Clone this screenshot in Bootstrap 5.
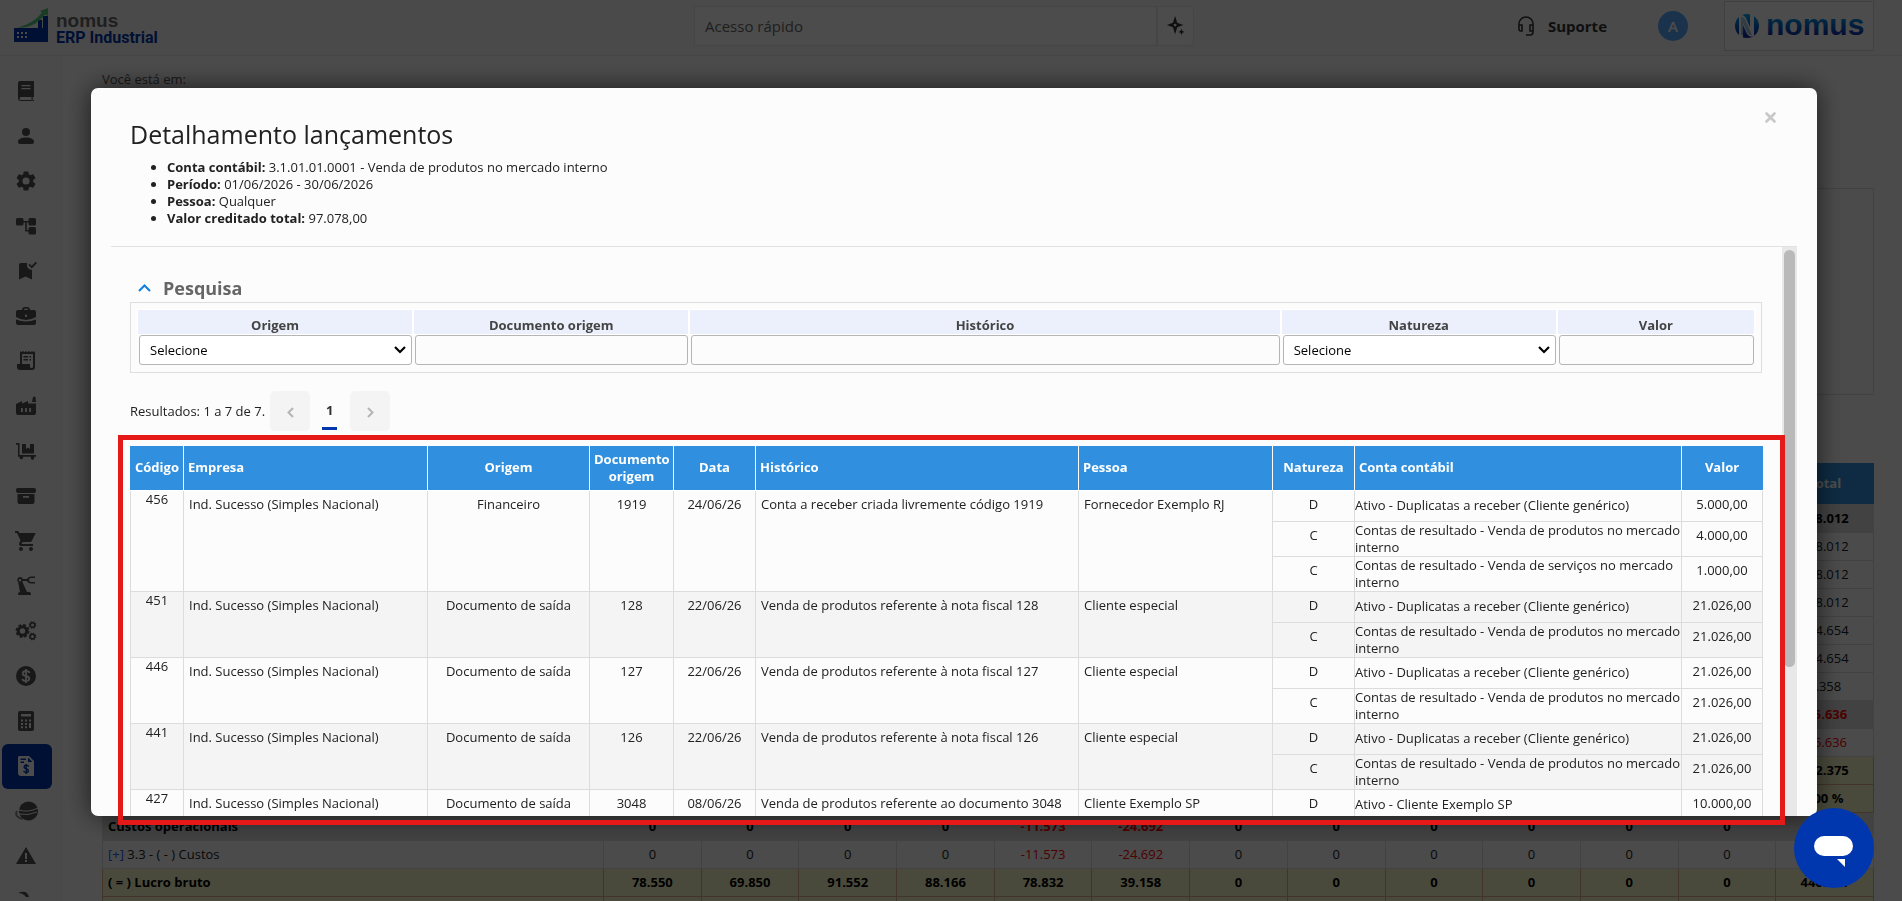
<!DOCTYPE html>
<html lang="pt-BR">
<head>
<meta charset="utf-8">
<meta name="viewport" content="width=device-width, initial-scale=1">
<title>Nomus ERP Industrial</title>
<link href="https://cdn.jsdelivr.net/npm/bootstrap@5.3.0/dist/css/bootstrap.min.css" rel="stylesheet">
<style>
body{font-family:"Open Sans",sans-serif;font-size:13px;line-height:17px;color:#212121;background:#fafafa;height:100vh;overflow:hidden}
/* top bar */
.topbar{height:56px;background:#f8f8f8;border-bottom:1px solid #e8e8e8;padding:0 28px 0 14px}
.topbar>div{flex:1 1 0}
.quick{flex:0 0 500px!important;height:40px;margin-top:6px}
.quick input{border:1px solid #e6e6e6;border-radius:0;background:#fdfdfd;font-size:15px;padding:0 10px}
.quick input::placeholder{color:#6a6a6a}
.quick button{width:37px;border:1px solid #e6e6e6;border-radius:0 5px 5px 0;background:#fdfdfd}
.brandtext{font-size:16px;line-height:17px;font-family:Roboto,sans-serif;font-weight:700;color:#0037ae}
.brandtext .top{font-family:"Liberation Sans",sans-serif;font-size:19px;line-height:17px;color:#6a6a6a}
.account{height:52px}
.support{font-size:15px;font-weight:700;color:#333;text-decoration:none;margin-right:51px}
.avatar{width:30px;height:30px;background:#5aa8ff;font-size:15px;font-weight:600;margin-right:20px}
.company{width:150px;height:50px;border:1px solid #d5d5d5;background:#fdfdfd}
/* side bar */
.sidebar{width:62px;background:#f8f8f8;border-right:1px solid #eee;padding:13px 0 0 2px}
.sidebar a{width:50px;height:45px;padding:0 2px 2px 0;border-radius:6px;color:#505050}
.sidebar a.on{background:#0037ae;color:#fff}
.sidebar svg{width:24px;height:24px;fill:currentColor}
/* report page */
.lower{min-height:0}
.page{padding:13px 28px 0 40px;min-width:0}
.crumb{line-height:20px;color:#555}
.panelbox{height:207px;margin-top:99px;border:1px solid #dcdcdc}
.report{margin-top:68px;table-layout:fixed;border-collapse:collapse;width:100%;text-align:center}
.report .wide{width:501px}
.report th{background:#3090df;color:#fff;height:41px}
.report td{height:28px;padding:0 5px;border:1px solid #dcdcdc;white-space:nowrap}
.report td:first-child{text-align:left}
.report .sum td{background:#dcdcdc;font-weight:700;color:#000}
.report .gold td{background:#f8f8c8;border-color:#e0b090;font-weight:700;color:#000}
.report .neg{color:#f00!important}
.report a{color:#2060ff;text-decoration:none}
/* dialog */
.shade{background:rgba(0,0,0,.7);z-index:10}
.dlg{position:fixed;z-index:20;top:88px;left:91px;right:85px;bottom:85px}
.sheet{background:#fcfcfc;border-radius:7px;box-shadow:0 0 26px rgba(0,0,0,.65);overflow:hidden;padding:0 20px}
.dlghead{height:159px;padding:28px 19px 0;border-bottom:1px solid #e2e2e2}
.dlghead h1{font-size:25px;line-height:36px;font-weight:400;margin:0 0 7px}
.dlghead ul{padding-left:37px}
.closebtn{top:16px;right:37px;color:#c8c8c8;line-height:1}
.scrollarea{min-height:0}
.content{overflow:hidden;padding:31px 20px 0 19px}
.track{width:15px;background:#e8e8e8;padding:3px 2px}
.thumb{width:11px;height:74%;border-radius:6px;background:#b9b9b9}
.content h2{font-size:18px;line-height:20px;font-weight:700;color:#666}
.filters{border:1px solid #dedede;padding:7px 5px}
.filters table{table-layout:fixed;width:100%;border-collapse:separate;border-spacing:2px 0}
.filters th{height:24px;background:#ecf0fc;color:#444;text-align:center;vertical-align:bottom;padding:0;line-height:17px;box-shadow:0 0 0 1px #fff}
.filters td{padding:1px 0 0 1px}
.f-m{width:274px}.f-l{width:589px}.f-s{width:196px}
.ctl{display:block;width:100%;height:30px;border:1px solid #b5b5b5;border-radius:3px;background:#fcfcfc;padding:0 10px;font-size:13px;color:#000}
select.ctl{appearance:none;background:#fff url("data:image/svg+xml,%3Csvg xmlns='http://www.w3.org/2000/svg' viewBox='0 0 12 8'%3E%3Cpath d='M1 1l5 5 5-5' fill='none' stroke='%23000' stroke-width='2.2'/%3E%3C/svg%3E") no-repeat right 5px center/12px 8px}
.pager{margin:18px 0 15px}
.pager span{margin-right:5px}
.pager button{width:40px;height:40px;border:0;border-radius:5px;background:#f4f4f4}
.pager .cur{width:15px;height:38px;border-bottom:3px solid #0037ae;line-height:36px;font-weight:700;color:#333;text-decoration:none;margin:0 13px 0 12px}
.entries{table-layout:fixed;border-collapse:collapse;width:100%}
.entries th{background:#3090df;color:#fff;height:44px;padding:0 4px;font-weight:700;border:1px solid #fff;border-top:0;text-align:center}
.entries th:first-child{border-left-color:#3090df}
.entries th:last-child{border-right-color:#3090df}
.entries td{border:1px solid #dcdcdc;padding:5px 5px 8px;text-align:center;vertical-align:top}
.entries th.l,.entries td.l{text-align:left}
.entries td.code{padding:0}
.entries td.acct{padding:0;text-align:left;vertical-align:middle;white-space:nowrap}
.entries tbody:nth-of-type(even) td{background:#f4f4f4}
.w1{width:53px}.w2{width:244px}.w3{width:162px}.w4{width:84px}.w5{width:82px}.w6{width:323px}.w7{width:194px}.w9{width:327px}.w10{width:81px}
/* red frame laid over the results */
.frame{top:347px;left:27px;right:32px;bottom:-9px;border:5px solid #e61919;pointer-events:none}
.chat{position:fixed;z-index:30;right:28px;bottom:13px;width:80px;height:80px;background:#0037ae;border:0}
</style>
</head>
<body class="d-flex flex-column">
<header class="topbar d-flex flex-shrink-0">
  <div class="d-flex gap-2 pt-2">
    <svg width="34" height="34" viewBox="0 0 34 34" aria-hidden="true"><path fill="#0037ae" d="M0 20h24v-8h4v8h1V8h5v26H0z"/><path fill="#f8f8f8" d="M3 24h2v2H3zM7 24h2v2H7zM11 24h2v2h-2zM3 28h2v2H3zM7 28h2v2H7zM11 28h2v2h-2z"/><path fill="#50c878" d="M3 19.500C15 17 23 11 28 4.500l-2-1.500 8-3v8l-3-1.500C25 14 17 19 9 19.500z"/></svg>
    <div class="brandtext pt-1"><div class="top">nomus</div><div>ERP Industrial</div></div>
  </div>
  <div class="quick d-flex">
    <input class="flex-grow-1" type="text" placeholder="Acesso rápido" aria-label="Acesso rápido">
    <button type="button" class="p-0" aria-label="Assistente"><svg width="20" height="22" viewBox="0 0 22 24"><path d="M10 1l2.300 7.500L19 11l-6.700 2.500L10 21l-2.300-7.500L1 11l6.700-2.500z" fill="#333"/><circle cx="10" cy="11" r="1.600" fill="#fafafa"/><path d="M17 15l1 2.500 2.500 1-2.500 1-1 2.500-1-2.500-2.500-1 2.500-1z" fill="#333"/></svg></button>
  </div>
  <div class="account d-flex justify-content-end align-items-center">
    <a href="#" class="support d-flex align-items-center gap-2"><svg width="20" height="22" viewBox="0 0 20 22" fill="none" stroke="#333" stroke-width="1.600"><path d="M3 15V9a7 7 0 0 1 14 0v8q0 3-3 3h-4M3 10h3v6H4.500Q3 16 3 14zM17 10h-3v6h3z"/></svg><span class="ps-1">Suporte</span></a>
    <span class="avatar rounded-circle text-white d-flex align-items-center justify-content-center">A</span>
    <div class="company ms-3">
      <svg width="148" height="48" viewBox="0 0 148 48" role="img" aria-label="nomus"><defs><linearGradient id="g" gradientUnits="userSpaceOnUse" x1="0" y1="12" x2="0" y2="36"><stop offset="0" stop-color="#00a8f0"/><stop offset="1" stop-color="#1020a0"/></linearGradient></defs><circle cx="22" cy="24" r="12" fill="url(#g)"/><path d="M14 34V14q4-3 7 2l4 9V12h4v22q-4 2-7-2l-4-9v13z" fill="#fdfdfd"/><path d="M16 33V15q2-1 4 2l7 16q-3 1-5-3l-4-9v12z" fill="url(#g)" opacity=".35"/><text x="41" y="33" font-family="Liberation Sans,sans-serif" font-weight="700" font-size="30" fill="url(#g)">nomus</text></svg>
    </div>
  </div>
</header>
<div class="lower d-flex flex-grow-1">
  <nav class="sidebar flex-shrink-0 overflow-hidden" aria-label="Módulos">
    <a href="#" aria-label="Cadastros" class="d-flex align-items-center justify-content-center"><svg viewBox="0 0 24 24"><path d="M6 2h14v16H7q-1.500 0-1.500 1.500T7 21h13v1H7q-3 0-3-3V4q0-2 2-2zm1.500 4v1.200h9V6zm0 3v1.200h9V9zM17.500 18h1.200v3.500h-1.200z" fill-rule="evenodd"/></svg></a>
    <a href="#" aria-label="Pessoas" class="d-flex align-items-center justify-content-center"><svg viewBox="0 0 24 24"><circle cx="12" cy="8" r="4"/><path d="M12 13.500c-4 0-8 1.500-8 4V18q0 2 2 2h12q2 0 2-2v-.5c0-2.500-4-4-8-4z"/></svg></a>
    <a href="#" aria-label="Configurações" class="d-flex align-items-center justify-content-center"><svg viewBox="0 0 24 24"><path d="M19.140 12.940c.04-.3.06-.61.06-.94 0-.32-.02-.64-.07-.94l2.030-1.580c.18-.14.23-.41.12-.61l-1.920-3.320c-.12-.22-.37-.29-.59-.22l-2.390.96c-.5-.38-1.030-.7-1.620-.94l-.36-2.540c-.04-.24-.24-.41-.48-.41h-3.840c-.24 0-.43.17-.47.41l-.36 2.540c-.59.24-1.130.57-1.620.94l-2.390-.96c-.22-.08-.47 0-.59.22L2.740 8.870c-.12.21-.08.47.12.61l2.030 1.580c-.05.3-.09.63-.09.94s.02.64.07.94l-2.030 1.580c-.18.14-.23.41-.12.61l1.920 3.320c.12.22.37.29.59.22l2.390-.96c.5.38 1.030.7 1.620.94l.36 2.540c.05.24.24.41.48.41h3.840c.24 0 .44-.17.47-.41l.36-2.540c.59-.24 1.130-.56 1.620-.94l2.390.96c.22.08.47 0 .59-.22l1.920-3.320c.12-.22.07-.47-.12-.61zM12 15.600a3.600 3.600 0 1 1 0-7.200 3.600 3.600 0 0 1 0 7.200z"/></svg></a>
    <a href="#" aria-label="Processos" class="d-flex align-items-center justify-content-center"><svg viewBox="0 0 24 24"><rect x="2" y="4" width="7.500" height="7.500" rx="1.500"/><rect x="14.500" y="4" width="7.500" height="7.500" rx="1.500"/><rect x="14.500" y="13" width="7.500" height="7.500" rx="1.500"/><path d="M9 7h6v1.600h-2.200V16H15v1.600h-3.800v-9H9z"/></svg></a>
    <a href="#" aria-label="Qualidade" class="d-flex align-items-center justify-content-center"><svg viewBox="0 0 24 24"><path d="M7 4h6q-1 6 5 7v9.500l-6.500-3L5 20.500V6q0-2 2-2zM14.500 6l1.200-1.200 2 2 4-4L23 4l-5.200 5.400z"/></svg></a>
    <a href="#" aria-label="Comercial" class="d-flex align-items-center justify-content-center"><svg viewBox="0 0 24 24"><path d="M8 6q0-3 3-3h2q3 0 3 3h4q2 0 2 2v5q-5 3-10 3T2 13V8q0-2 2-2zm2 0h4q0-1.500-1.500-1.500h-1Q10 4.500 10 6zm2 4.500a1.200 1.200 0 1 0 0 2.400 1.200 1.200 0 0 0 0-2.400zM2 15.500q5 2 10 2t10-2V19q0 2-2 2H4q-2 0-2-2z" fill-rule="evenodd"/></svg></a>
    <a href="#" aria-label="Fiscal" class="d-flex align-items-center justify-content-center"><svg viewBox="0 0 24 24"><path d="M6 2l1.500 1.200L9 2l1.500 1.200L12 2l1.500 1.200L15 2l1.500 1.200L18 2l1.500 1.200L21 2v16q0 3-3 3H6q-3 0-3-3v-3h3zm2 3v10h8v3q0 1 1.500 1t1.500-1V5zm1.500 2H14v1.500H9.500zm6 0H17v1.500h-1.500zm-6 3H14v1.500H9.500zm6 0H17v1.500h-1.500z" fill-rule="evenodd"/></svg></a>
    <a href="#" aria-label="Produção" class="d-flex align-items-center justify-content-center"><svg viewBox="0 0 24 24"><path d="M18 8l1-5q1.500-1 2.500 0l.5 5zM2 10l6-3v2.500L14 7v2.500h8V19q0 2-2 2H4q-2 0-2-2zm5 4v4h1.800v-4zm4.100 0v4h1.800v-4zm4.100 0v4H17v-4z" fill-rule="evenodd"/></svg></a>
    <a href="#" aria-label="Logística" class="d-flex align-items-center justify-content-center"><svg viewBox="0 0 24 24"><path d="M2 4h3.500v12H22v1.800h-2a1.800 1.800 0 1 1-3 0H9a1.800 1.800 0 1 1-3.300 0H4V5.700H2zM8 5h4v5l2-1.500L16 10V5h4v9.500H8z"/></svg></a>
    <a href="#" aria-label="Estoque" class="d-flex align-items-center justify-content-center"><svg viewBox="0 0 24 24"><rect x="2" y="4" width="20" height="5" rx="2"/><path d="M3.500 10h17v8q0 2-2 2h-13q-2 0-2-2zm5.500 2v1.800h6V12z" fill-rule="evenodd"/></svg></a>
    <a href="#" aria-label="Compras" class="d-flex align-items-center justify-content-center"><svg viewBox="0 0 24 24"><path d="M7 18c-1.100 0-2 .9-2 2s.9 2 2 2 2-.9 2-2-.9-2-2-2zM1 2v2h2l3.600 7.590-1.350 2.450C4.520 15.370 5.480 17 7 17h12v-2H7.420l1.130-2h7.450c.75 0 1.410-.41 1.750-1.030L21.700 4H5.210l-.94-2zm16 16c-1.100 0-2 .9-2 2s.9 2 2 2 2-.9 2-2-.9-2-2-2z"/></svg></a>
    <a href="#" aria-label="Automação" class="d-flex align-items-center justify-content-center"><svg viewBox="0 0 24 24"><path d="M6 3a3 3 0 0 1 2.800 2H13q1-2.500 4-2.500h4V4h-4q-2 0-2 2t2 2h4v1.500h-4q-3 0-4-2.500H8.800l-.5.800L13 18h2q2 0 2 2v1H4v-1q0-2 2-2L4.200 8.200A3 3 0 0 1 6 3zm0 2a1.200 1.200 0 1 0 0 2.400A1.200 1.200 0 0 0 6 5z" fill-rule="evenodd"/></svg></a>
    <a href="#" aria-label="Manutenção" class="d-flex align-items-center justify-content-center"><svg viewBox="0 0 24 24" stroke="currentColor"><g fill="none"><circle cx="8.500" cy="12" r="4.200" stroke-width="3"/><circle cx="8.500" cy="12" r="6" stroke-width="2" stroke-dasharray="2.700 2"/><circle cx="18.500" cy="6" r="2.200" stroke-width="1.400"/><circle cx="18.500" cy="6" r="3.200" stroke-width="1.200" stroke-dasharray="1.400 1.100"/><circle cx="18.500" cy="17.500" r="2.200" stroke-width="1.400"/><circle cx="18.500" cy="17.500" r="3.200" stroke-width="1.200" stroke-dasharray="1.400 1.100"/></g></svg></a>
    <a href="#" aria-label="Financeiro" class="d-flex align-items-center justify-content-center"><svg viewBox="0 0 24 24"><circle cx="12" cy="12" r="10"/><path d="M15.500 9q-.5-2-3.500-2T8.700 9.400q0 2 3.300 2.600t3.300 2.600Q15.300 17 12 17t-3.700-2.200M12 5v14" fill="none" stroke="#f8f8f8" stroke-width="1.800"/></svg></a>
    <a href="#" aria-label="Custos" class="d-flex align-items-center justify-content-center"><svg viewBox="0 0 24 24"><path d="M6 2h12q2 0 2 2v16q0 2-2 2H6q-2 0-2-2V4q0-2 2-2zm1 3v2.500h10V5zm0 5.500v2h2v-2zm4 0v2h2v-2zm4 0v2h2v-2zM7 14v2h2v-2zm4 0v2h2v-2zm4 0v5h2v-5zm-8 3.300v2h2v-2zm4 0v2h2v-2z" fill-rule="evenodd"/></svg></a>
    <a href="#" aria-label="Contabilidade" class="on d-flex align-items-center justify-content-center"><svg viewBox="0 0 24 24"><path d="M5 2h10l5 5v15H7q-3 0-3-3V4q0-2 1-2zm9 1.500V8h4.500zM6.500 4.500V6H12V4.500zm0 3V9H10V7.500z" fill-rule="evenodd"/><path d="M14.700 12.500q-.5-1.200-2.500-1.200T10 13q0 1.400 2.200 1.800t2.200 1.900q0 1.600-2.200 1.600t-2.600-1.400M12.200 10v10" fill="none" stroke="#0037ae" stroke-width="1.400"/></svg></a>
    <a href="#" aria-label="Integrações" class="d-flex align-items-center justify-content-center"><svg viewBox="0 0 24 24"><circle cx="14.500" cy="12" r="9.500"/><path d="M5 11q9 3 19-2M5 15q9 2 18-2" fill="none" stroke="#f8f8f8" stroke-width="1"/><path d="M3 12q-3 6 6 8" fill="none" stroke="#888" stroke-width="2"/></svg></a>
    <a href="#" aria-label="Alertas" class="d-flex align-items-center justify-content-center"><svg viewBox="0 0 24 24"><path d="M12 3l10 17H2zm-1 6v6h2V9zm0 7v2h2v-2z" fill-rule="evenodd"/></svg></a>
    <a href="#" aria-label="Relatórios" class="d-flex align-items-center justify-content-center"><svg viewBox="0 0 24 24"><path d="M4 4q9-4 11 4h-3Q9 4 4 4z"/></svg></a>
  </nav>
  <main class="page flex-grow-1">
    <div class="crumb">Você está em:</div>
    <div class="panelbox"></div>
    <table class="report">
      <colgroup><col class="wide"><col span="13"></colgroup>
      <thead><tr><th colspan="13"></th><th>Total</th></tr></thead>
      <tbody>
        <tr class="sum"><td colspan="13"></td><td>448.012</td></tr>
        <tr><td colspan="13"></td><td>448.012</td></tr>
        <tr><td colspan="13"></td><td>448.012</td></tr>
        <tr><td colspan="13"></td><td>448.012</td></tr>
        <tr><td colspan="13"></td><td>444.654</td></tr>
        <tr><td colspan="13"></td><td>444.654</td></tr>
        <tr><td colspan="13"></td><td>3.358</td></tr>
        <tr class="sum"><td colspan="13"></td><td class="neg">-35.636</td></tr>
        <tr><td colspan="13"></td><td class="neg">-35.636</td></tr>
        <tr class="gold"><td colspan="13"></td><td>412.375</td></tr>
        <tr class="gold"><td colspan="13"></td><td>100 %</td></tr>
        <tr class="sum"><td>Custos operacionais</td><td>0</td><td>0</td><td>0</td><td>0</td><td class="neg">-11.573</td><td class="neg">-24.692</td><td>0</td><td>0</td><td>0</td><td>0</td><td>0</td><td>0</td><td></td></tr>
        <tr><td><a href="#">[+]</a> 3.3 - ( - ) Custos</td><td>0</td><td>0</td><td>0</td><td>0</td><td class="neg">-11.573</td><td class="neg">-24.692</td><td>0</td><td>0</td><td>0</td><td>0</td><td>0</td><td>0</td><td></td></tr>
        <tr class="gold"><td>( = ) Lucro bruto</td><td>78.550</td><td>69.850</td><td>91.552</td><td>88.166</td><td>78.832</td><td>39.158</td><td>0</td><td>0</td><td>0</td><td>0</td><td>0</td><td>0</td><td>446.111</td></tr>
        <tr class="gold"><td></td><td></td><td></td><td></td><td></td><td></td><td></td><td></td><td></td><td></td><td></td><td></td><td></td><td></td></tr>
      </tbody>
    </table>
  </main>
</div>
<div class="shade position-fixed top-0 start-0 w-100 h-100"></div>

<div class="dlg" role="dialog" aria-labelledby="dlgtitle">
  <div class="sheet h-100 d-flex flex-column">
    <div class="dlghead flex-shrink-0">
      <h1 id="dlgtitle">Detalhamento lançamentos</h1>
      <ul class="mb-0">
        <li><b>Conta contábil:</b> 3.1.01.01.0001 - Venda de produtos no mercado interno</li>
        <li><b>Período:</b> 01/06/2026 - 30/06/2026</li>
        <li><b>Pessoa:</b> Qualquer</li>
        <li><b>Valor creditado total:</b> 97.078,00</li>
      </ul>
    </div>
    <button type="button" class="closebtn btn p-1 border-0 position-absolute" aria-label="Fechar"><svg width="11" height="11" viewBox="0 0 11 11"><path d="M1.500 1.500l8 8M9.500 1.500l-8 8" stroke="currentColor" stroke-width="2.600" stroke-linecap="round"/></svg></button>
    <div class="scrollarea d-flex flex-grow-1">
      <div class="content flex-grow-1">
        <div class="d-flex align-items-center ps-2 mb-1"><svg width="13" height="8" viewBox="0 0 13 8" fill="none" stroke="#1080e0" stroke-width="2"><path d="M1 7l5.500-5.500L12 7"/></svg><h2 class="m-0 ms-2 ps-1">Pesquisa</h2></div>
        <div class="filters">
          <table>
            <colgroup><col class="f-m"><col class="f-m"><col class="f-l"><col class="f-m"><col class="f-s"></colgroup>
            <tr><th><label for="f1">Origem</label></th><th><label for="f2">Documento origem</label></th><th><label for="f3">Histórico</label></th><th><label for="f4">Natureza</label></th><th><label for="f5">Valor</label></th></tr>
            <tr><td><select id="f1" class="ctl"><option>Selecione</option></select></td><td><input id="f2" type="text" class="ctl"></td><td><input id="f3" type="text" class="ctl"></td><td><select id="f4" class="ctl"><option>Selecione</option></select></td><td><input id="f5" type="text" class="ctl"></td></tr>
          </table>
        </div>
        <div class="pager d-flex align-items-center">
          <span>Resultados: 1 a 7 de 7.</span>
          <button type="button" aria-label="Anterior"><svg width="7" height="11" viewBox="0 0 7 11" fill="none" stroke="#b5b5b5" stroke-width="2"><path d="M6 1L1.500 5.500 6 10"/></svg></button>
          <a href="#" class="cur text-center">1</a>
          <button type="button" aria-label="Próxima"><svg width="7" height="11" viewBox="0 0 7 11" fill="none" stroke="#b5b5b5" stroke-width="2"><path d="M1 1l4.500 4.500L1 10"/></svg></button>
        </div>
        <table class="entries">
          <colgroup><col class="w1"><col class="w2"><col class="w3"><col class="w4"><col class="w5"><col class="w6"><col class="w7"><col class="w5"><col class="w9"><col class="w10"></colgroup>
          <thead><tr><th>Código</th><th class="l">Empresa</th><th>Origem</th><th>Documento origem</th><th>Data</th><th class="l">Histórico</th><th class="l">Pessoa</th><th>Natureza</th><th class="l">Conta contábil</th><th>Valor</th></tr></thead>
          <tbody>
            <tr><td rowspan="3" class="code">456</td><td rowspan="3" class="l">Ind. Sucesso (Simples Nacional)</td><td rowspan="3">Financeiro</td><td rowspan="3">1919</td><td rowspan="3">24/06/26</td><td rowspan="3" class="l">Conta a receber criada livremente código 1919</td><td rowspan="3" class="l">Fornecedor Exemplo RJ</td><td>D</td><td class="acct">Ativo - Duplicatas a receber (Cliente genérico)</td><td>5.000,00</td></tr>
            <tr><td>C</td><td class="acct">Contas de resultado - Venda de produtos no mercado<br>interno</td><td>4.000,00</td></tr>
            <tr><td>C</td><td class="acct">Contas de resultado - Venda de serviços no mercado<br>interno</td><td>1.000,00</td></tr>
          </tbody>
          <tbody>
            <tr><td rowspan="2" class="code">451</td><td rowspan="2" class="l">Ind. Sucesso (Simples Nacional)</td><td rowspan="2">Documento de saída</td><td rowspan="2">128</td><td rowspan="2">22/06/26</td><td rowspan="2" class="l">Venda de produtos referente à nota fiscal 128</td><td rowspan="2" class="l">Cliente especial</td><td>D</td><td class="acct">Ativo - Duplicatas a receber (Cliente genérico)</td><td>21.026,00</td></tr>
            <tr><td>C</td><td class="acct">Contas de resultado - Venda de produtos no mercado<br>interno</td><td>21.026,00</td></tr>
          </tbody>
          <tbody>
            <tr><td rowspan="2" class="code">446</td><td rowspan="2" class="l">Ind. Sucesso (Simples Nacional)</td><td rowspan="2">Documento de saída</td><td rowspan="2">127</td><td rowspan="2">22/06/26</td><td rowspan="2" class="l">Venda de produtos referente à nota fiscal 127</td><td rowspan="2" class="l">Cliente especial</td><td>D</td><td class="acct">Ativo - Duplicatas a receber (Cliente genérico)</td><td>21.026,00</td></tr>
            <tr><td>C</td><td class="acct">Contas de resultado - Venda de produtos no mercado<br>interno</td><td>21.026,00</td></tr>
          </tbody>
          <tbody>
            <tr><td rowspan="2" class="code">441</td><td rowspan="2" class="l">Ind. Sucesso (Simples Nacional)</td><td rowspan="2">Documento de saída</td><td rowspan="2">126</td><td rowspan="2">22/06/26</td><td rowspan="2" class="l">Venda de produtos referente à nota fiscal 126</td><td rowspan="2" class="l">Cliente especial</td><td>D</td><td class="acct">Ativo - Duplicatas a receber (Cliente genérico)</td><td>21.026,00</td></tr>
            <tr><td>C</td><td class="acct">Contas de resultado - Venda de produtos no mercado<br>interno</td><td>21.026,00</td></tr>
          </tbody>
          <tbody>
            <tr><td class="code">427</td><td class="l">Ind. Sucesso (Simples Nacional)</td><td>Documento de saída</td><td>3048</td><td>08/06/26</td><td class="l">Venda de produtos referente ao documento 3048</td><td class="l">Cliente Exemplo SP</td><td>D</td><td class="acct">Ativo - Cliente Exemplo SP</td><td>10.000,00</td></tr>
          </tbody>
        </table>
      </div>
      <div class="track flex-shrink-0"><div class="thumb"></div></div>
    </div>
  </div>
  <div class="frame position-absolute"></div>
</div>
<button type="button" class="chat rounded-circle p-0" aria-label="Chat"><svg width="80" height="80" viewBox="0 0 80 80"><rect x="20" y="28" width="39" height="20" rx="10" fill="#fff"/><path d="M43 51h8v8z" fill="#fff"/></svg></button>
<script src="https://cdn.jsdelivr.net/npm/bootstrap@5.3.0/dist/js/bootstrap.bundle.min.js"></script>
</body>
</html>
